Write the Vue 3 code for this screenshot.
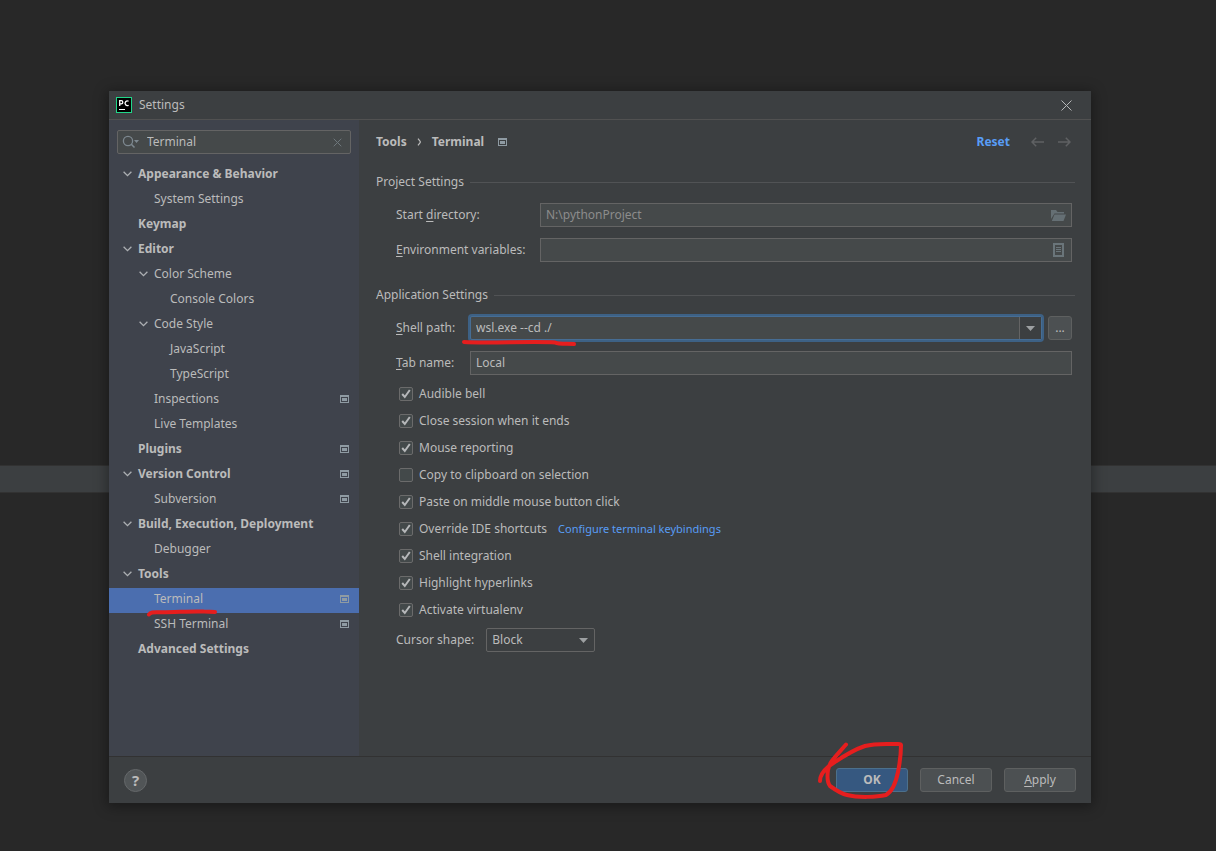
<script setup>
import { ref } from 'vue'

const tree = [
  { name: 'Appearance & Behavior', level: 0, open: true },
  { name: 'System Settings', level: 1 },
  { name: 'Keymap', level: 0 },
  { name: 'Editor', level: 0, open: true },
  { name: 'Color Scheme', level: 1, open: true },
  { name: 'Console Colors', level: 2 },
  { name: 'Code Style', level: 1, open: true },
  { name: 'JavaScript', level: 2 },
  { name: 'TypeScript', level: 2 },
  { name: 'Inspections', level: 1, project: true },
  { name: 'Live Templates', level: 1 },
  { name: 'Plugins', level: 0, project: true },
  { name: 'Version Control', level: 0, open: true, project: true },
  { name: 'Subversion', level: 1, project: true },
  { name: 'Build, Execution, Deployment', level: 0, open: true },
  { name: 'Debugger', level: 1 },
  { name: 'Tools', level: 0, open: true },
  { name: 'Terminal', level: 1, project: true, selected: true },
  { name: 'SSH Terminal', level: 1, project: true },
  { name: 'Advanced Settings', level: 0 },
]

const options = ref([
  { id: 'bell', label: 'Audible bell', on: true },
  { id: 'close', label: 'Close session when it ends', on: true },
  { id: 'mouse', label: 'Mouse reporting', on: true },
  { id: 'copy', label: 'Copy to clipboard on selection', on: false },
  { id: 'paste', label: 'Paste on middle mouse button click', on: true },
  { id: 'override', label: 'Override IDE shortcuts', on: true, link: 'Configure terminal keybindings' },
  { id: 'shell', label: 'Shell integration', on: true },
  { id: 'links', label: 'Highlight hyperlinks', on: true },
  { id: 'venv', label: 'Activate virtualenv', on: true },
])

const query = ref('Terminal')
const startDir = ref('N:\\pythonProject')
const env = ref('')
const shellPath = ref('wsl.exe --cd ./')
const tabName = ref('Local')
const cursor = ref('Block')
</script>

<template>
  <div class="desktop">
    <div class="band"></div>
    <main class="dialog">
      <header class="titlebar">
        <svg class="logo" width="16" height="16" viewBox="0 0 16 16">
          <rect x=".5" y=".5" width="15" height="15" fill="#000" stroke="#21d789" />
          <path d="M3.7 9V3.6h1.5a1.5 1.5 0 0 1 0 3.2H3.7M12.6 4.3a2.3 2.3 0 1 0 0 3.9" fill="none" stroke="#fff" stroke-width="1.3" />
          <path d="M3 12.5h6" stroke="#fff" />
        </svg>
        <h1>Settings</h1>
        <button class="close" aria-label="Close">
          <svg width="11" height="11" viewBox="0 0 11 11"><path d="M.5.5l10 10M10.5.5l-10 10" stroke="#b5b7b8" fill="none" /></svg>
        </button>
      </header>

      <div class="body">
        <aside class="sidebar">
          <div class="search">
            <svg width="18" height="14" viewBox="0 0 18 14">
              <circle cx="6" cy="6" r="4.6" fill="none" stroke="#7d8890" stroke-width="1.3" />
              <path d="M9.3 9.3l3.2 3.2" stroke="#7d8890" stroke-width="1.6" />
              <path d="M12 5h5l-2.500 3z" fill="#7d8890" />
            </svg>
            <input v-model="query" aria-label="Search settings" />
            <button aria-label="Clear search">
              <svg width="9" height="9" viewBox="0 0 9 9"><path d="M.7.7l7.600 7.600M8.300.7l-7.600 7.600" stroke="#6e777c" fill="none" /></svg>
            </button>
          </div>
          <ul class="tree">
            <li v-for="item in tree" :key="item.name">
              <button class="node" :class="['level-' + item.level, { selected: item.selected }]">
                <span class="twisty">
                  <svg v-if="item.open" width="9" height="6" viewBox="0 0 9 6"><path d="M.6.7l3.900 3.900L8.400.7" fill="none" stroke="#adb0b3" stroke-width="1.3" /></svg>
                </span>
                <span class="name">{{ item.name }}</span>
                <svg v-if="item.project" class="project" width="9" height="8" viewBox="0 0 9 8"><path d="M0 0h9v8H0zM1 2v5h7V2zM2 3h5v3H2z" fill-rule="evenodd" /></svg>
                <svg v-if="item.selected" class="mark mark-node" width="70" height="8" viewBox="0 0 70 8">
                  <path d="M2 5.500C4 2.500 8 3.500 15 3.300C33 3 48 2 57 2.600L68 3" fill="none" stroke="#e61e1e" stroke-width="4" stroke-linecap="round" stroke-linejoin="round" />
                </svg>
              </button>
            </li>
          </ul>
        </aside>

        <section class="content">
          <div class="crumbs">
            <b>Tools</b>
            <svg width="5" height="8" viewBox="0 0 5 8"><path d="M1 .7C2 2 3.400 3.300 3.400 4S2 6 1 7.300" fill="none" stroke="#bbb" stroke-width="1.2" /></svg>
            <b>Terminal</b>
            <svg class="project" width="9" height="8" viewBox="0 0 9 8"><path d="M0 0h9v8H0zM1 2v5h7V2zM2 3h5v3H2z" fill-rule="evenodd" /></svg>
            <a class="reset" href="#">Reset</a>
            <button aria-label="Back"><svg width="13" height="10" viewBox="0 0 13 10"><path d="M13 5H1.200M5.200.8L1 5l4.200 4.200" fill="none" stroke="#5f6163" stroke-width="1.500" /></svg></button>
            <button aria-label="Forward"><svg width="13" height="10" viewBox="0 0 13 10"><path d="M0 5h11.800M7.800.8L12 5 7.800 9.200" fill="none" stroke="#5f6163" stroke-width="1.500" /></svg></button>
          </div>

          <h2>Project Settings</h2>
          <div class="group project-grid">
            <label for="dir">Start <u>d</u>irectory:</label>
            <div class="field">
              <input id="dir" v-model="startDir" class="muted" />
              <button aria-label="Browse"><svg width="15" height="12" viewBox="0 0 15 12"><path d="M0 10V1h5l1.500 2H13v1.500H3.500zM3.500 5.500H15L12.500 12H.8z" fill="#656f74" /></svg></button>
            </div>
            <label for="env"><u>E</u>nvironment variables:</label>
            <div class="field">
              <input id="env" v-model="env" />
              <button class="list" aria-label="Edit variables"><svg width="11" height="14" viewBox="0 0 11 14"><path d="M1 1h9v12H1z" fill="none" stroke="#6a757a" stroke-width="2" /><path d="M3 4.500h5M3 6.500h5M3 8.500h5" stroke="#6a757a" /></svg></button>
            </div>
          </div>

          <h2>Application Settings</h2>
          <div class="group app-grid">
            <label for="path"><u>S</u>hell path:</label>
            <div class="path-row">
              <div class="combo">
                <input id="path" v-model="shellPath" />
                <button aria-label="Show shells"><svg width="9" height="5" viewBox="0 0 9 5"><path d="M0 0h9L4.500 5z" fill="#9da0a2" /></svg></button>
              </div>
              <button class="btn more" aria-label="Browse for shell">...</button>
              <svg class="mark mark-path" width="116" height="8" viewBox="0 0 116 8">
                <path d="M3 3C25 4.500 75 2 94 3.500C98 5.500 106 4.500 113 5" fill="none" stroke="#e61e1e" stroke-width="4" stroke-linecap="round" stroke-linejoin="round" />
              </svg>
            </div>
            <label for="tab"><u>T</u>ab name:</label>
            <div class="field"><input id="tab" v-model="tabName" /></div>
          </div>

          <ul class="checks">
            <li v-for="o in options" :key="o.id">
              <input :id="o.id" v-model="o.on" type="checkbox" />
              <svg v-if="o.on" class="tick" width="14" height="14" viewBox="0 0 14 14"><path d="M3.200 7l2.600 3L10.800 3" fill="none" stroke="#b6b8ba" stroke-width="2" /></svg>
              <label :for="o.id">{{ o.label }}</label>
              <a v-if="o.link" href="#">{{ o.link }}</a>
            </li>
          </ul>

          <div class="cursor">
            <label for="cursor">Cursor shape:</label>
            <div class="select">
              <select id="cursor" v-model="cursor">
                <option>Block</option>
                <option>Underline</option>
                <option>Vertical</option>
              </select>
              <svg width="9" height="5" viewBox="0 0 9 5"><path d="M0 0h9L4.500 5z" fill="#9da0a2" /></svg>
            </div>
          </div>
        </section>
      </div>

      <footer class="footer">
        <button class="help" aria-label="Help">?</button>
        <div class="ok-wrap">
          <button class="btn wide primary">OK</button>
          <svg class="mark mark-ok" width="90" height="60" viewBox="0 0 90 60">
            <path d="M29 4.500C20 15 12 22 11 30C10 37 10 42 13 46C20 51 25 54 30 55C42 58 60 57 69 55C76 51 79 42 81 32C83 22 84 15 84 5Q84 4 81 4C67 4 59 3 48 6C33 11 24 18 12 26C6 31 3 36 3 41" fill="none" stroke="#e61e1e" stroke-width="4" stroke-linecap="round" stroke-linejoin="round" />
          </svg>
        </div>
        <button class="btn wide">Cancel</button>
        <button class="btn wide"><span><u>A</u>pply</span></button>
      </footer>
    </main>
  </div>
</template>

<style>
body {
  background: #282828;
}
</style>

<style scoped>
.desktop {
  --line: #646464;
  --field: #45494a;
  position: relative;
  box-sizing: border-box;
  display: flex;
  min-height: 100vh;
  padding: 91px 125px 48px 109px;
  color: #bbbbbb;
  font: 12px/20px "Noto Sans", "Open Sans", sans-serif;
}
.desktop * {
  box-sizing: border-box;
}
.band {
  position: absolute;
  top: 465px;
  left: 0;
  right: 0;
  height: 28px;
  background: #3c3f41;
  border: solid #323232;
  border-width: 1px 0;
}
.dialog {
  position: relative;
  display: flex;
  flex: 1;
  flex-direction: column;
  min-width: 0;
  background: #3c3f41;
  box-shadow: 0 2px 12px 2px rgba(0, 0, 0, 0.35);
}
button,
input,
select {
  font: inherit;
  color: inherit;
  margin: 0;
  padding: 0;
  border: 0;
  background: none;
  outline: none;
}
button {
  display: flex;
  align-items: center;
  justify-content: center;
}
svg {
  display: block;
  flex: none;
}
ul {
  list-style: none;
  margin: 0;
  padding: 0;
}
a {
  color: #589df6;
  text-decoration: none;
}
u {
  text-underline-offset: 2px;
}
h1,
h2 {
  margin: 0;
  font: inherit;
}
.titlebar {
  display: flex;
  align-items: center;
  gap: 7px;
  height: 29px;
  padding: 0 17px 0 7px;
  border-bottom: 1px solid #515151;
}
.close {
  width: 15px;
  height: 16px;
  margin-left: auto;
}
.body {
  display: flex;
  flex: 1;
}
.sidebar {
  flex: none;
  width: 250px;
  padding-top: 10px;
  background: #3f434c;
}
.search {
  display: flex;
  align-items: center;
  height: 24px;
  margin: 0 8px 9px;
  padding: 0 4px;
  border: 1px solid var(--line);
  border-radius: 2px;
  background: var(--field);
}
.search input {
  flex: 1;
  min-width: 0;
  margin-left: 7px;
}
.search button {
  width: 18px;
  height: 18px;
}
.node {
  position: relative;
  width: 100%;
  height: 25px;
  padding: 0 10px 3px 14px;
  justify-content: flex-start;
}
.twisty {
  flex: none;
  width: 15px;
}
.level-0 {
  font-weight: 700;
}
.level-1 {
  padding-left: 30px;
}
.level-2 {
  padding-left: 46px;
}
.selected {
  background: #4b6eaf;
}
.name {
  flex: 1;
  text-align: left;
}
.project {
  fill: #8f9ba3;
}
.mark {
  position: absolute;
  z-index: 2;
  pointer-events: none;
}
.mark-node {
  left: 38px;
  top: 21px;
}
.mark-path {
  left: -9px;
  top: 23px;
}
.mark-ok {
  left: -19px;
  top: -28px;
}
.content {
  flex: 1;
  min-width: 0;
  padding: 12px 16px 0 17px;
}
.crumbs {
  display: flex;
  align-items: center;
  height: 20px;
  gap: 10px;
}
.crumbs .project {
  margin-left: 4px;
}
.reset {
  margin: 0 9px 0 auto;
  font-weight: 700;
}
.crumbs button {
  width: 17px;
}
.crumbs button:last-child {
  margin-right: 2px;
}
h2 {
  display: flex;
  align-items: center;
  gap: 6px;
  margin: 20px 0 11px;
}
h2::after {
  content: "";
  flex: 1;
  height: 1px;
  background: #515355;
}
.group {
  display: grid;
  align-items: center;
  row-gap: 11px;
  padding: 0 3px 0 20px;
}
.project-grid {
  grid-template-columns: 144px 1fr;
  margin-bottom: 23px;
}
.app-grid {
  grid-template-columns: 74px 1fr;
}
.field {
  display: flex;
  align-items: center;
  height: 24px;
  border: 1px solid var(--line);
  background: var(--field);
  padding: 0 5px;
}
.field input {
  flex: 1;
  min-width: 0;
}
.field button {
  width: 16px;
}
.muted {
  color: #8c8c8c;
}
.path-row {
  position: relative;
  display: flex;
  gap: 6px;
}
.combo {
  display: flex;
  flex: 1;
  min-width: 0;
  height: 24px;
  border: 1px solid #466d94;
  border-radius: 2px;
  box-shadow: 0 0 0 2px #3d6185;
  background: var(--field);
}
.combo input {
  flex: 1;
  min-width: 0;
  padding: 0 5px;
}
.combo button {
  width: 22px;
  border-left: 1px solid var(--line);
  background: #3c3f41;
}
.btn {
  height: 24px;
  border: 1px solid #5e6060;
  border-radius: 3px;
  background: #4c5052;
}
.more {
  width: 24px;
}
.wide {
  width: 72px;
}
.primary {
  border-color: #4c708c;
  background: #365880;
  font-weight: 700;
}
.checks {
  margin: 5px 0 0 23px;
}
.checks li {
  position: relative;
  display: flex;
  align-items: center;
  height: 27px;
}
.checks input {
  appearance: none;
  width: 14px;
  height: 14px;
  margin-right: 6px;
  border: 1px solid #6b6b6b;
  border-radius: 2px;
  background: #43494a;
}
.tick {
  position: absolute;
  left: 0;
  pointer-events: none;
}
.checks a {
  margin-left: 11px;
  font-size: 11px;
}
.cursor {
  display: flex;
  align-items: center;
  gap: 12px;
  margin: 5px 0 0 20px;
}
.select {
  position: relative;
  display: flex;
  align-items: center;
}
.select select {
  appearance: none;
  width: 109px;
  height: 24px;
  padding: 0 5px;
  border: 1px solid var(--line);
  border-radius: 2px;
}
.select svg {
  position: absolute;
  right: 7px;
  pointer-events: none;
}
.footer {
  display: flex;
  align-items: center;
  gap: 12px;
  height: 47px;
  padding: 0 15px;
  border-top: 1px solid #323232;
}
.help {
  width: 23px;
  height: 23px;
  margin-right: auto;
  border: 1px solid #65686a;
  border-radius: 50%;
  background: #515557;
  font-weight: 700;
  font-size: 15px;
}
.ok-wrap {
  position: relative;
}
</style>
